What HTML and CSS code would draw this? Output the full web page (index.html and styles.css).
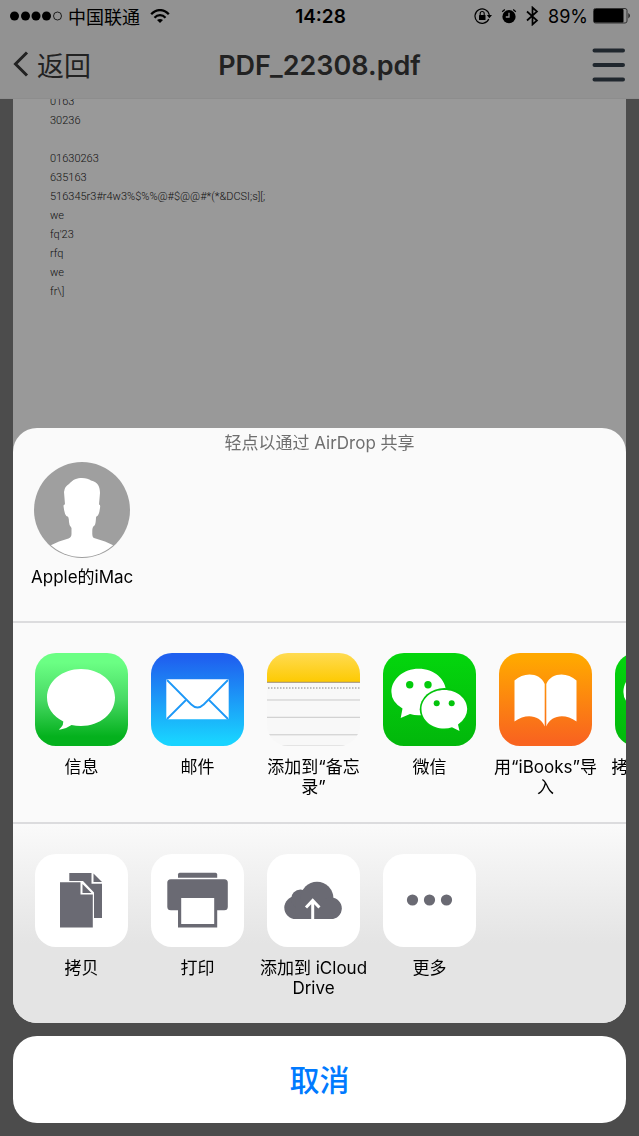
FILE: index.html
```html
<!DOCTYPE html>
<html lang="zh-CN">
<head>
<meta charset="utf-8">
<meta name="viewport" content="width=device-width, initial-scale=1">
<title>PDF_22308.pdf</title>
<link rel="stylesheet" href="styles.css">
</head>
<body>
<svg class="defs" aria-hidden="true">
  <defs>
    <linearGradient id="green-light" x2="0" y2="1"><stop offset=".1" stop-color="#6bff84"/><stop offset=".5" stop-color="#48d964"/><stop offset=".9" stop-color="#04b11d"/></linearGradient>
    <linearGradient id="blue" x2="0" y2="1"><stop offset=".05" stop-color="#1f60ef"/><stop offset=".95" stop-color="#19d3ff"/></linearGradient>
    <linearGradient id="yellow" x2="0" y2="1"><stop stop-color="#ffdb52"/><stop offset="1" stop-color="#fdca02"/></linearGradient>
    <linearGradient id="green" x2="0" y2="1"><stop stop-color="#04d60d"/><stop offset="1" stop-color="#02b70b"/></linearGradient>
    <linearGradient id="orange" x2="0" y2="1"><stop offset=".05" stop-color="#ffa800"/><stop offset=".95" stop-color="#f9641f"/></linearGradient>
    <symbol id="wechat" viewBox="0 0 93 93">
      <rect width="93" height="93" fill="url(#green)"/>
      <path fill="#fff" d="M35.700 15.700C51 15.700 63 26 63 39S51 62.300 35.700 62.300Q31 62.300 27 61L17.700 65L19.500 55.500Q8.400 49 8.400 39C8.400 26 20.500 15.700 35.700 15.700Z"/>
      <circle cx="26.700" cy="31.700" r="3.700" fill="#03cb0c"/><circle cx="45" cy="31.700" r="3.700" fill="#03cb0c"/>
      <ellipse cx="61.300" cy="56.200" rx="24.600" ry="21.100" fill="#03c40c"/>
      <path fill="#fff" d="M61.300 37C74 37 84.200 45.500 84.200 56Q84.200 65 75 71.500L76.500 78L69 74.200Q65.500 75.500 61.300 75.500C48.500 75.500 38.500 67 38.500 56.200S48.500 37 61.300 37Z"/>
      <circle cx="53.700" cy="50.300" r="3" fill="#03c40c"/><circle cx="68.700" cy="50.300" r="3" fill="#03c40c"/>
    </symbol>
  </defs>
</svg>

<header class="top">
  <div class="status">
    <div class="status-left">
      <svg width="52" height="12" viewBox="0 0 52 12" aria-hidden="true"><circle cx="4.500" cy="6" r="4.500"/><circle cx="15.500" cy="6" r="4.500"/><circle cx="26" cy="6" r="4.500"/><circle cx="36.500" cy="6" r="4.500"/><circle cx="47.500" cy="6" r="4" fill="none" stroke="#000" stroke-width=".8"/></svg>
      <span class="carrier">中国联通</span>
      <svg class="wifi" width="20" height="15" viewBox="0 0 20 15" fill="none" stroke="#000" stroke-width="2.200" aria-hidden="true"><path d="M1.200 5.300C6-.4 14-.4 18.800 5.300M4.500 8.700C7.500 5.300 12.500 5.300 15.500 8.700"/><path fill="#000" stroke="none" d="M10 14L7 11Q10 8.800 13 11Z"/></svg>
    </div>
    <time class="clock">14:28</time>
    <div class="status-right">
      <svg width="18" height="16" viewBox="0 0 18 16" aria-hidden="true"><path d="M14.800 11A7.200 7.200 0 1 1 15.300 7" fill="none" stroke="#000" stroke-width="1.200"/><path d="M12.800 7h5.200l-2.600 3.200Z"/><rect x="5" y="7" width="6.500" height="5" rx=".5"/><path d="M6.200 7V5.500a2 2 0 0 1 4 0V7" fill="none" stroke="#000" stroke-width="1.100"/></svg>
      <svg width="16" height="16" viewBox="0 0 16 16" aria-hidden="true"><circle cx="8" cy="8.700" r="6.600"/><path d="M1.200 3.800L3.800 1.600M14.800 3.800L12.200 1.600" stroke="#000" stroke-width="1.300"/><path d="M8 4.800V9H4.800" fill="none" stroke="#929292" stroke-width="1.300"/></svg>
      <svg width="13" height="20" viewBox="0 0 13 20" fill="none" stroke="#000" stroke-width="1.700" aria-hidden="true"><path d="M1 5.500L11 14.500L6.500 18.500V1.500L11 5.500L1 14.500"/></svg>
      <div class="battery">
        <span class="percent">89%</span>
        <svg width="38" height="16" viewBox="0 0 38 16" aria-hidden="true"><rect x=".5" y=".5" width="33.500" height="14.500" rx="2" fill="none" stroke="#333"/><rect x="1" y="1" width="29.500" height="13.500" rx="1"/><path d="M35.500 5Q38 7.700 35.500 10.500Z"/></svg>
      </div>
    </div>
  </div>
  <nav class="nav">
    <a class="back" href="#">
      <svg width="16" height="26" viewBox="0 0 16 26" fill="none" stroke="#222" stroke-width="3" aria-hidden="true"><path d="M14 1.500L2.500 13L14 24.500"/></svg>
      <span>返回</span>
    </a>
    <h1 class="title">PDF_22308.pdf</h1>
    <button class="menu" type="button" aria-label="菜单">
      <svg width="34" height="34" viewBox="0 0 34 34" stroke="#20272e" stroke-width="4" stroke-linecap="round" aria-hidden="true"><path d="M2.500 2.500H31M2.500 17H31M2.500 31.500H31"/></svg>
    </button>
  </nav>
</header>

<main class="viewer">
  <pre class="paper">0163
30236

01630263
635163
516345r3#r4w3%$%%@#$@@#*(*&amp;DCSI;s][;
we
fq'23
rfq
we
fr\]</pre>
</main>

<div class="overlay">
  <section class="sheet" role="dialog" aria-label="共享">
    <div class="airdrop">
      <h2 class="hint">轻点以通过 AirDrop 共享</h2>
      <button class="person" type="button">
        <svg class="avatar" viewBox="0 0 96 96" aria-hidden="true">
          <clipPath id="face"><circle cx="48" cy="48" r="47"/></clipPath>
          <circle cx="48" cy="48" r="48" fill="#9f9f9f"/>
          <path clip-path="url(#face)" fill="#fff" d="M48 16C52 16 55 17.200 57 18.500C64 20 66 25 66 31L65 42.500Q66.700 42.500 66 46Q65 54 62.500 54.500C61.500 54.500 62.500 61 60.500 63.500Q58 65 58.300 70Q58 75 60 76L71 79.500L82 84.500V96H14V84.500L25 79.500L34.500 76.500Q37.500 75 37.500 72V66Q35 63.500 35 60Q34.800 54.500 33.500 54.500Q30.500 54 29.500 44Q29.500 42 31 42.500L30 30Q30.500 24.500 35 22C39 17.500 43 16 48 16Z"/>
        </svg>
        <span class="label">Apple的iMac</span>
      </button>
    </div>

    <ul class="row">
      <li><button class="item" type="button">
        <svg class="icon" viewBox="0 0 93 93" aria-hidden="true"><rect width="93" height="93" fill="url(#green-light)"/><path fill="#fff" d="M46 16C65 16 80 28.500 80 44.500S65 73 46 73Q41 73 36.500 72Q31 76 24.500 76.800Q23.500 76.500 26 74.500Q28.500 72 28.300 68.500Q12 60 12 44.500C12 28.500 27 16 46 16Z"/></svg>
        <span class="label">信息</span></button></li>
      <li><button class="item" type="button">
        <svg class="icon" viewBox="0 0 93 93" aria-hidden="true"><rect width="93" height="93" fill="url(#blue)"/><rect x="15.300" y="26.300" width="62.400" height="40" rx="1" fill="#fff"/><g fill="none" stroke="#1d98f7" stroke-width="1.800"><path d="M16 27L40.300 51.500Q46.500 57.500 52.700 51.500L77 27"/><path d="M16 66L35 47M77 66L58 47"/></g></svg>
        <span class="label">邮件</span></button></li>
      <li><button class="item" type="button">
        <svg class="icon" viewBox="0 0 93 93" aria-hidden="true"><rect width="93" height="93" fill="#f8f8f8"/><rect width="93" height="29" fill="url(#yellow)"/><path d="M0 29.300H93" stroke="#9d8d70"/><path d="M1 35H93" stroke="#aaa" stroke-width="1.500" stroke-dasharray="1.500 1.500"/><path d="M0 47H93M0 64.300H93M0 81.800H93" stroke="#c9c9c9"/><path d="M0 92.500H93" stroke="#e4e4e4"/></svg>
        <span class="label">添加到“备忘录”</span></button></li>
      <li><button class="item" type="button">
        <svg class="icon" aria-hidden="true"><use href="#wechat"/></svg>
        <span class="label">微信</span></button></li>
      <li><button class="item" type="button">
        <svg class="icon" viewBox="0 0 93 93" aria-hidden="true"><rect width="93" height="93" fill="url(#orange)"/><path fill="#fff" d="M15.500 27.500C25 18.500 41 19.500 45.700 31V73.500C41 62 27 60 15.500 68.500ZM77.500 27.500C68 18.500 52 19.500 47.300 31V73.500C52 62 66 60 77.500 68.500Z"/></svg>
        <span class="label">用“iBooks”导入</span></button></li>
      <li><button class="item" type="button">
        <svg class="icon" aria-hidden="true"><use href="#wechat"/></svg>
        <span class="label">拷贝到“微信”</span></button></li>
    </ul>

    <ul class="row actions">
      <li><button class="item" type="button">
        <svg class="icon" viewBox="0 0 93 93" fill="#6a6a73" aria-hidden="true"><path d="M34.300 19H56.500V29.700H67V64H59V38.500L48 27H34.300Z"/><path d="M58.500 19.500L67 28H58.500Z"/><path d="M25 28.300H45.500V40.500H57.800V73.500H25Z"/><path d="M47.500 30L56.500 39H47.500Z"/></svg>
        <span class="label">拷贝</span></button></li>
      <li><button class="item" type="button">
        <svg class="icon" viewBox="0 0 93 93" fill="#6a6a73" aria-hidden="true"><path d="M27 23.700V20.500Q27 18.800 28.700 18.800H64.500Q66.200 18.800 66.200 20.500V23.700Z"/><rect x="16.300" y="25.300" width="60.500" height="31" rx="3.500"/><path d="M27 50H66.200V73.500H27Z"/><path fill="#fff" d="M30.200 44H63.200V70H30.200Z"/></svg>
        <span class="label">打印</span></button></li>
      <li><button class="item" type="button">
        <svg class="icon" viewBox="0 0 93 93" fill="#6a6a73" aria-hidden="true"><circle cx="28.700" cy="53.700" r="11.400"/><circle cx="33.500" cy="45" r="9.400"/><circle cx="50" cy="44.200" r="16.400"/><circle cx="64" cy="54.300" r="10.800"/><path d="M28.500 45H64V65.100H28.500Z"/><path d="M45.700 66V47M39 53.500L45.700 46.500L52.400 53.500" fill="none" stroke="#fff" stroke-width="3"/></svg>
        <span class="label">添加到 iCloud Drive</span></button></li>
      <li><button class="item" type="button">
        <svg class="icon" viewBox="0 0 93 93" fill="#6a6a73" aria-hidden="true"><circle cx="29.500" cy="46" r="5.600"/><circle cx="46.500" cy="46" r="5.600"/><circle cx="63.500" cy="46" r="5.600"/></svg>
        <span class="label">更多</span></button></li>
    </ul>
  </section>
  <button class="cancel" type="button">取消</button>
</div>
</body>
</html>
```
FILE: styles.css
```css
* { box-sizing: border-box; }

body {
  margin: 0;
  min-height: 100vh;
  background: #4c4c4c;
  color: #000;
  font-family: Inter, "Noto Sans CJK SC", sans-serif;
}

button {
  border: 0;
  padding: 0;
  background: none;
  color: inherit;
  font: inherit;
  cursor: pointer;
}

.defs { position: absolute; width: 0; height: 0; }

.top {
  background: #929292;
  border-bottom: 1px solid #8d8d8d;
}

.status {
  display: grid;
  grid-template-columns: 1fr auto 1fr;
  align-items: center;
  height: 32px;
  padding: 0 8px 0 10px;
  font-size: 18px;
}

.status-left, .status-right, .battery { display: flex; align-items: center; }
.status-left { gap: 6px; }
.status-right { justify-content: flex-end; gap: 9px; }
.battery { gap: 5px; }
.wifi { margin-left: 4px; }
.clock { font-size: 19px; font-weight: 600; }

.nav {
  display: grid;
  grid-template-columns: 1fr auto 1fr;
  align-items: center;
  height: 66px;
  padding: 0 13px;
}

.back {
  display: flex;
  align-items: center;
  gap: 8px;
  padding-bottom: 2px;
  color: #222;
  font-size: 27px;
  text-decoration: none;
}

.title {
  margin: 0;
  color: #222;
  font-size: 27px;
  font-weight: 600;
}

.menu { display: flex; justify-self: end; }

.viewer { padding: 0 13px; }

.paper {
  margin: 0;
  padding: 0 37px 200px;
  overflow: hidden;
  background: #999;
  color: #111;
  font-family: Roboto, "Liberation Sans", sans-serif;
  font-size: 11px;
  font-weight: 300;
  line-height: 19px;
}

.paper::before {
  content: "";
  display: block;
  margin-top: -7px;
}

.overlay {
  position: fixed;
  inset: 0;
  display: flex;
  flex-direction: column;
  justify-content: flex-end;
  gap: 13px;
  padding: 13px;
}

.sheet {
  overflow: hidden;
  border-radius: 24px;
  background: #fafafa;
}

.airdrop { padding: 0 18px 34px; }

.hint {
  margin: 0 0 4px;
  color: #6f6f6f;
  font-size: 17px;
  font-weight: 400;
  line-height: 30px;
  text-align: center;
}

.person, .item {
  display: flex;
  flex-direction: column;
  align-items: center;
}

.person { gap: 9px; }
.avatar { width: 96px; height: 96px; }

.label {
  font-size: 17px;
  line-height: 20px;
  text-align: center;
}

.row {
  display: flex;
  gap: 5px;
  margin: 0;
  padding: 30px 0 25px 13px;
  overflow: hidden;
  border-top: 2px solid #dcdcde;
  list-style: none;
}

.row li { flex: none; }
.item { gap: 11px; width: 111px; }

.icon {
  width: 93px;
  height: 93px;
  border-radius: 21px;
}

.actions { background: linear-gradient(#fafafa, #e4e4e4 60%); }
.actions .icon { background: #fff; }

.cancel {
  flex: none;
  height: 87px;
  padding-bottom: 3px;
  border-radius: 24px;
  background: #fff;
  color: #007aff;
  font-size: 30px;
  font-weight: 500;
}
```
